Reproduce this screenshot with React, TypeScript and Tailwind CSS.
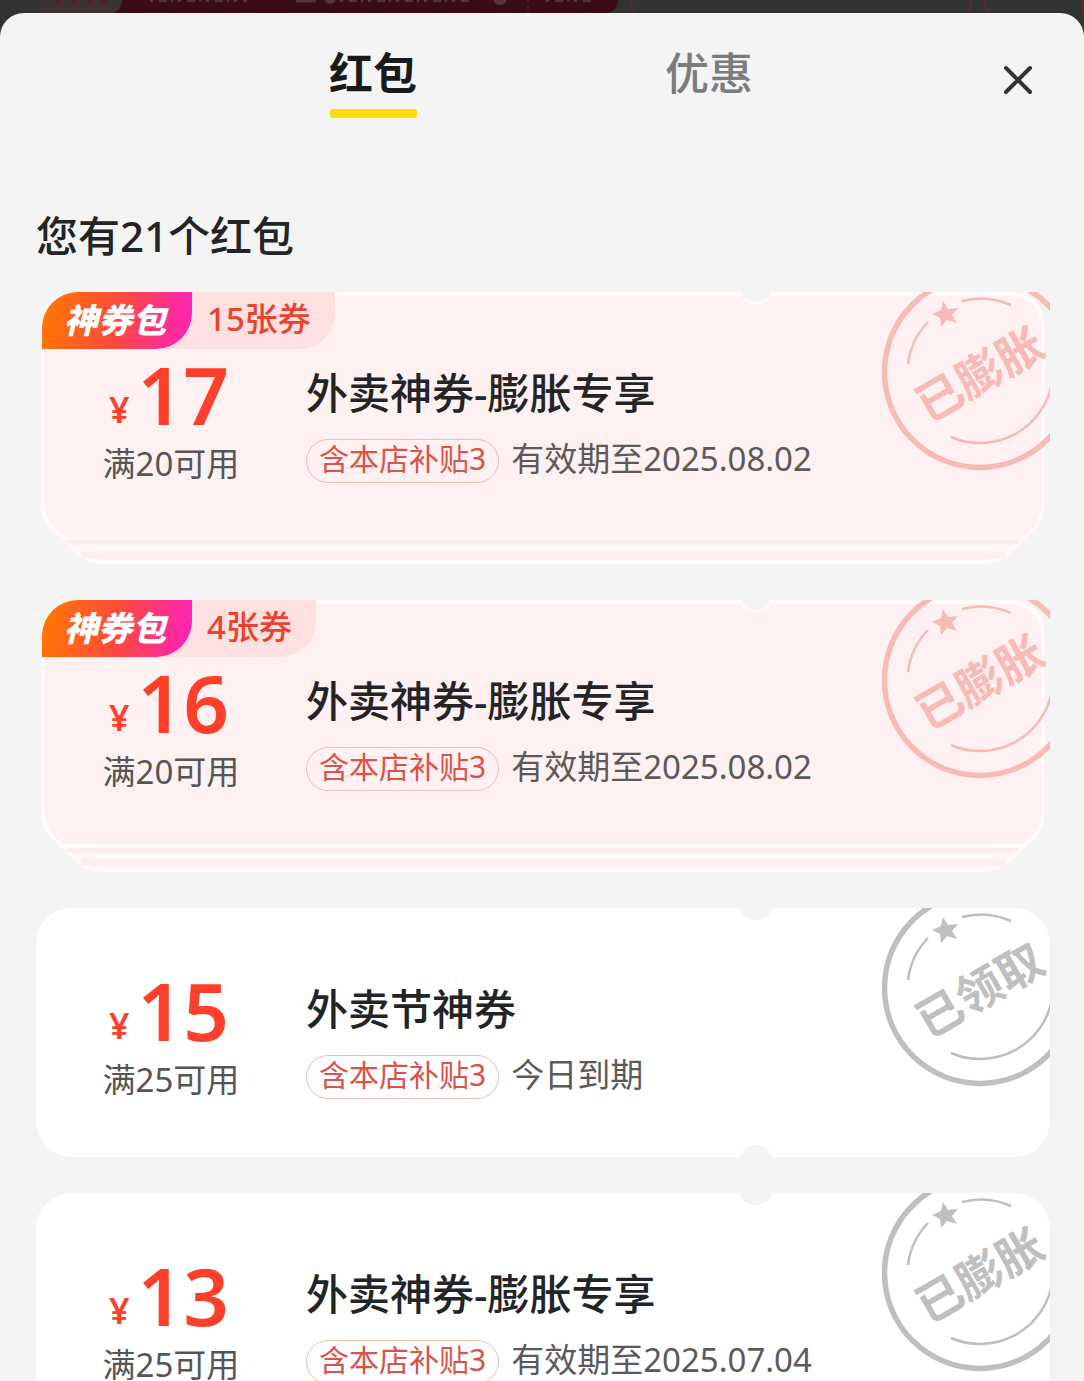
import React from "react";
import clsx from "clsx";

interface Coupon {
  amount: number;
  condition: string;
  title: string;
  subsidy: string;
  expiry: string;
  stamp: string;
  packCount?: string;
}

const coupons: Coupon[] = [
  { amount: 17, condition: "满20可用", title: "外卖神券-膨胀专享", subsidy: "含本店补贴3", expiry: "有效期至2025.08.02", stamp: "已膨胀", packCount: "15张券" },
  { amount: 16, condition: "满20可用", title: "外卖神券-膨胀专享", subsidy: "含本店补贴3", expiry: "有效期至2025.08.02", stamp: "已膨胀", packCount: "4张券" },
  { amount: 15, condition: "满25可用", title: "外卖节神券", subsidy: "含本店补贴3", expiry: "今日到期", stamp: "已领取" },
  { amount: 13, condition: "满25可用", title: "外卖神券-膨胀专享", subsidy: "含本店补贴3", expiry: "有效期至2025.07.04", stamp: "已膨胀" },
];

const Stamp: React.FC<{ text: string; className: string }> = ({ text, className }) => (
  <svg
    viewBox="0 0 168 180"
    className={clsx("pointer-events-none absolute top-0 right-0 h-[180px] w-[168px]", className)}
    fill="none"
    stroke="currentColor"
  >
    <circle cx="98" cy="80" r="95.5" strokeWidth="5.5" />
    <path d="M26 72A73 73 0 0 1 46 30" strokeWidth="2.5" />
    <path d="M80 9A73 73 0 0 1 129 13" strokeWidth="2.5" />
    <path d="M69 145A73 73 0 0 0 170 91" strokeWidth="2.5" />
    <path
      d="M61 9L66 17L76 16L70 23L75 31L65 28L59 35L58 26L50 22L59 18Z"
      fill="currentColor"
      stroke="none"
    />
    <text
      x="98"
      y="99"
      textAnchor="middle"
      transform="rotate(-30 98 83)"
      fill="currentColor"
      stroke="none"
      className="text-[46px] font-bold"
    >
      {text}
    </text>
  </svg>
);

const CouponCard: React.FC<{ coupon: Coupon }> = ({ coupon }) => {
  const isPack = Boolean(coupon.packCount);

  return (
    <li className={clsx("relative", isPack ? "h-[272px]" : "h-[249px] overflow-hidden rounded-[36px] bg-white")}>
      {isPack && (
        <>
          {/* Stacked tickets behind the front one */}
          <div className="absolute inset-x-[5px] inset-y-0">
            <svg viewBox="0 0 1004 272" preserveAspectRatio="none" className="h-full w-full">
              <path
                d="M38 2H966Q1002 2 1002 38V212Q1002 229 991 238L970 258Q958 270 942 270H62Q46 270 34 258L13 238Q2 229 2 212V38Q2 2 38 2Z"
                fill="#fff1f1"
                stroke="#fffafa"
                strokeWidth="4"
              />
              <path d="M22 246H982" stroke="#fffaf9" strokeWidth="4" />
              <path d="M26 250H978" stroke="#fbebeb" strokeWidth="3" />
              <path d="M32 256H972" stroke="#fff8f7" strokeWidth="4" />
              <path d="M40 263H964" stroke="#ffedf0" strokeWidth="6" />
            </svg>
          </div>
          <div className="absolute top-0 left-[6px] flex h-[57px] items-stretch">
            <span className="z-10 flex w-[150px] items-center justify-center rounded-tl-[36px] rounded-br-[36px] bg-linear-[100deg] from-[#ff7a00] via-[#ff4a3d] via-50% to-[#ff20c0] pr-1 text-[34px] font-black text-white italic">
              神券包
            </span>
            <span className="-ml-9 flex items-center rounded-br-[36px] bg-[#ffe0e0] pr-6 pb-1 pl-[51px] text-[33px] font-medium text-[#e8442f]">
              {coupon.packCount}
            </span>
          </div>
        </>
      )}

      {/* Punched notches */}
      <span className={clsx("absolute -top-6 right-[276px] size-9 rounded-full bg-[#f4f4f4]", isPack && "border-2 border-[#fffafa] [clip-path:inset(24px_0_0_0)]")} />
      {!isPack && <span className="absolute right-[276px] -bottom-6 size-9 rounded-full bg-[#f4f4f4]" />}

      <div className="relative flex">
        <div className="flex w-[270px] flex-col items-center pt-[66px]">
          <div className="flex items-end gap-2 pr-1 text-[#fe3f29]">
            <span className="text-[36px] leading-10 font-semibold">¥</span>
            <span className="text-[80px] leading-[72px] font-semibold">{coupon.amount}</span>
          </div>
          <p className="text-[33px] leading-[68px] text-[#555]">{coupon.condition}</p>
        </div>
        <div className="flex flex-col pt-[71px]">
          <h2 className="text-[42px] leading-[60px] font-medium text-[#222426]">{coupon.title}</h2>
          <div className="mt-4 flex items-center gap-3">
            <span className="flex h-11 items-center rounded-full border border-[#edbcb6] px-3 pb-1 text-[30px] leading-10 text-[#d9534a]">
              {coupon.subsidy}
            </span>
            <span className="pb-1 text-[33px] leading-10 text-[#5a5a5a]">{coupon.expiry}</span>
          </div>
        </div>
      </div>

      <Stamp text={coupon.stamp} className={isPack ? "text-[#f8bab7]" : "text-[#bfbfbf]"} />
    </li>
  );
};

const App: React.FC = () => {
  return (
    <div className="h-screen overflow-hidden bg-[#333] font-['Noto_Sans','Noto_Sans_CJK_SC',sans-serif]">
      {/* Dimmed page behind the sheet */}
      <div className="flex h-[13px] gap-3 overflow-hidden pl-[42px]">
        <div className="flex w-[576px] rounded-br-xl bg-[#380d16]">
          <div className="w-20 rounded-br-xl bg-[#3d3233]">
            <svg viewBox="0 0 80 13" className="h-[13px] w-20" stroke="#5a1a20" strokeWidth="4">
              <path d="M18 -2L15 3M34 -2L31 3M50 -2L47 3M64 -2L60 3" />
            </svg>
          </div>
          <svg viewBox="0 0 496 13" className="h-[13px] w-[496px]" fill="none" stroke="#55343a">
            <path d="M28 1H125M218 1H350M424 1H470" strokeWidth="2" strokeDasharray="3 6 8 4 2 5" />
            <path d="M174 1H194" strokeWidth="3" />
            <circle cx="208" cy="-2" r="6" fill="#55343a" stroke="none" />
            <circle cx="378" cy="-2" r="7" fill="#55343a" stroke="none" />
            <path d="M406 0V13" strokeDasharray="3 3" />
          </svg>
        </div>
        <div className="-mt-4 h-8 w-[342px] shrink-0 rounded-xl border-2 border-[#582c30]" />
        <div className="-mt-4 h-8 flex-1 rounded-bl-xl border-2 border-[#582c30]" />
      </div>

      <div className="min-h-full rounded-t-[24px] bg-[#f4f4f4] pr-[34px] pl-9">
        <header className="relative flex pt-7">
          <nav className="flex flex-1 justify-center gap-[248px] pr-1 text-[44px] leading-[64px]">
            <button className="flex flex-col items-center font-bold text-[#1a1a1a]">
              红包
              <span className="mt-1 h-[9px] w-[87px] rounded-[3px] bg-[#fddc08]" />
            </button>
            <button className="flex flex-col items-center font-medium text-[#7c7c7c]">优惠</button>
          </nav>
          <button aria-label="关闭" className="absolute top-[52px] right-[17px]">
            <svg viewBox="0 0 30 30" className="size-[30px]" stroke="#333" strokeWidth="4" strokeLinecap="round">
              <path d="M3 3L27 27M27 3L3 27" />
            </svg>
          </button>
        </header>

        <h1 className="mt-[86px] text-[42px] leading-[64px] font-medium text-[#222426]">您有21个红包</h1>

        <ul className="mt-6 flex flex-col gap-9">
          {coupons.map((coupon) => (
            <CouponCard key={coupon.amount} coupon={coupon} />
          ))}
        </ul>
      </div>
    </div>
  );
};

export default App;
